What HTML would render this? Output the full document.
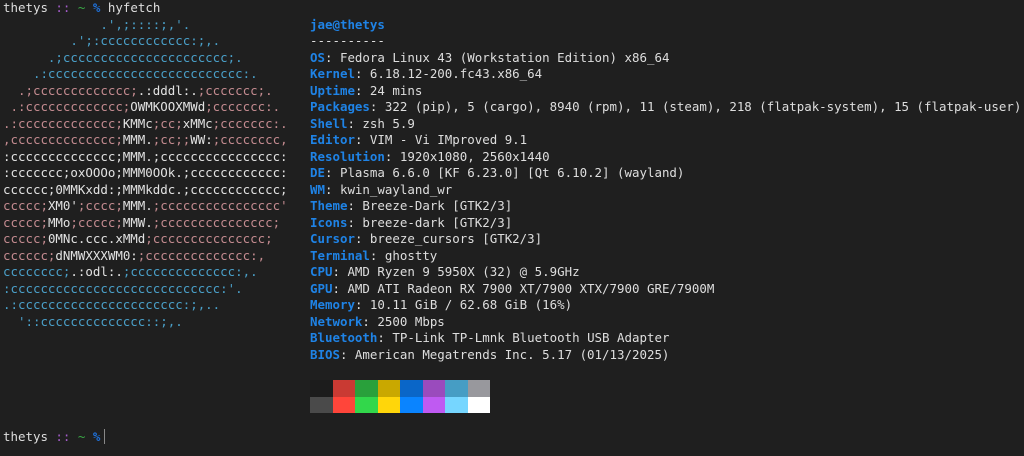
<!DOCTYPE html>
<html><head><meta charset="utf-8"><style>
html,body{margin:0;padding:0;background:#1f1f1f;width:1024px;height:456px;overflow:hidden}
pre{margin:0;position:absolute;font-family:"DejaVu Sans Mono","Liberation Mono",monospace;font-size:12.45px;line-height:16.5px;color:#dedede;white-space:pre}
#l{left:3px;top:0}
#i{left:310px;top:16.5px}
.c{color:#4aa0c9}.p{color:#c48b90}.w{color:#e2e2e2}
.b{color:#1f83e6;font-weight:bold}
.m{color:#a35cc9}.g{color:#3aa845}.bl{color:#1f6fd6;font-weight:bold}
.pal{position:absolute;left:310px;width:180px;height:16.5px;display:flex}
.pal div{flex:1}
.cur{display:inline-block;width:1px;height:15px;background:#888;vertical-align:-3px;margin-left:4px}
</style></head><body>
<pre id="l">thetys <span class="m">::</span> <span class="g">~</span> <span class="bl">%</span> hyfetch
<span class="c">             .',;::::;,'.</span>
<span class="c">         .';:cccccccccccc:;,.</span>
<span class="c">      .;cccccccccccccccccccccc;.</span>
<span class="c">    .:cccccccccccccccccccccccccc:.</span>
<span class="p">  .;ccccccccccccc;</span><span class="w">.:dddl:.</span><span class="p">;ccccccc;.</span>
<span class="p"> .:ccccccccccccc;</span><span class="w">OWMKOOXMWd</span><span class="p">;ccccccc:.</span>
<span class="p">.:ccccccccccccc;</span><span class="w">KMMc</span><span class="p">;cc;</span><span class="w">xMMc</span><span class="p">;ccccccc:.</span>
<span class="p">,cccccccccccccc;</span><span class="w">MMM.</span><span class="p">;cc;;</span><span class="w">WW:</span><span class="p">;cccccccc,</span>
<span class="w">:cccccccccccccc;MMM.;cccccccccccccccc:</span>
<span class="w">:ccccccc;oxOOOo;MMM0OOk.;cccccccccccc:</span>
<span class="w">cccccc;0MMKxdd:;MMMkddc.;cccccccccccc;</span>
<span class="p">ccccc;</span><span class="w">XM0'</span><span class="p">;cccc;</span><span class="w">MMM.</span><span class="p">;cccccccccccccccc'</span>
<span class="p">ccccc;</span><span class="w">MMo</span><span class="p">;ccccc;</span><span class="w">MMW.</span><span class="p">;ccccccccccccccc;</span>
<span class="p">ccccc;</span><span class="w">0MNc.ccc.xMMd</span><span class="p">;ccccccccccccccc;</span>
<span class="p">cccccc;</span><span class="w">dNMWXXXWM0:</span><span class="p">;cccccccccccccc:,</span>
<span class="c">cccccccc;</span><span class="w">.:odl:.</span><span class="c">;cccccccccccccc:,.</span>
<span class="c">:cccccccccccccccccccccccccccc:'.</span>
<span class="c">.:cccccccccccccccccccccc:;,..</span>
<span class="c">  '::cccccccccccccc::;,.</span>






thetys <span class="m">::</span> <span class="g">~</span> <span class="bl">%</span><span class="cur"></span></pre>
<pre id="i"><span class="b">jae@thetys</span>
----------
<span class="b">OS</span>: Fedora Linux 43 (Workstation Edition) x86_64
<span class="b">Kernel</span>: 6.18.12-200.fc43.x86_64
<span class="b">Uptime</span>: 24 mins
<span class="b">Packages</span>: 322 (pip), 5 (cargo), 8940 (rpm), 11 (steam), 218 (flatpak-system), 15 (flatpak-user)
<span class="b">Shell</span>: zsh 5.9
<span class="b">Editor</span>: VIM - Vi IMproved 9.1
<span class="b">Resolution</span>: 1920x1080, 2560x1440
<span class="b">DE</span>: Plasma 6.6.0 [KF 6.23.0] [Qt 6.10.2] (wayland)
<span class="b">WM</span>: kwin_wayland_wr
<span class="b">Theme</span>: Breeze-Dark [GTK2/3]
<span class="b">Icons</span>: breeze-dark [GTK2/3]
<span class="b">Cursor</span>: breeze_cursors [GTK2/3]
<span class="b">Terminal</span>: ghostty
<span class="b">CPU</span>: AMD Ryzen 9 5950X (32) @ 5.9GHz
<span class="b">GPU</span>: AMD ATI Radeon RX 7900 XT/7900 XTX/7900 GRE/7900M
<span class="b">Memory</span>: 10.11 GiB / 62.68 GiB (16%)
<span class="b">Network</span>: 2500 Mbps
<span class="b">Bluetooth</span>: TP-Link TP-Lmnk Bluetooth USB Adapter
<span class="b">BIOS</span>: American Megatrends Inc. 5.17 (01/13/2025)</pre>
<div class="pal" style="top:380px"><div style="background:#1c1c1c"></div><div style="background:#c93a33"></div><div style="background:#29a03b"></div><div style="background:#c9a800"></div><div style="background:#0a66c8"></div><div style="background:#9a4bbd"></div><div style="background:#469dc4"></div><div style="background:#98989d"></div></div>
<div class="pal" style="top:396.5px"><div style="background:#4a4a4a"></div><div style="background:#ff453a"></div><div style="background:#32d74b"></div><div style="background:#ffd60a"></div><div style="background:#0a84ff"></div><div style="background:#bf5af2"></div><div style="background:#76d6ff"></div><div style="background:#ffffff"></div></div>
</body></html>
